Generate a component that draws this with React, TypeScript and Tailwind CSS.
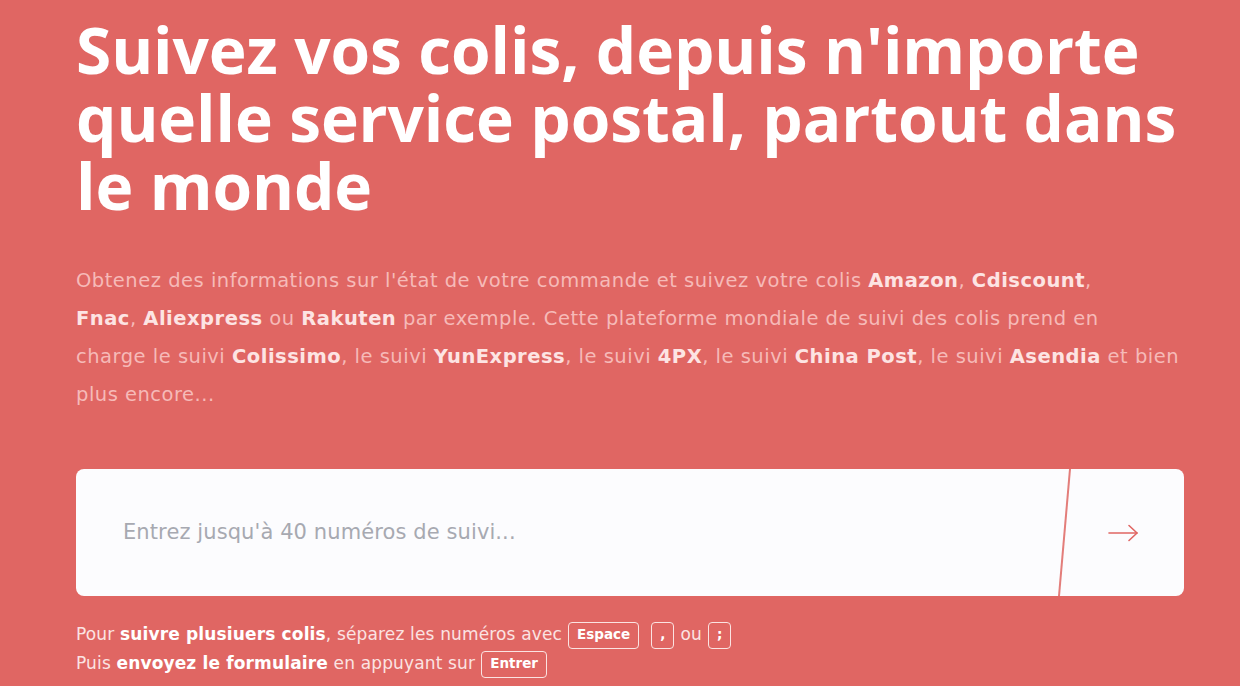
import React from 'react';

const Kbd: React.FC<{ children: React.ReactNode }> = ({ children }) => (
  <span className="inline-flex items-center justify-center h-[27px] min-w-[21px] px-[8px] mx-[6px] border-[1.5px] border-[#fbe3e2] rounded-[4px] text-[13.5px] leading-none font-bold tracking-normal text-white align-middle">
    {children}
  </span>
);

const ArrowIcon: React.FC = () => (
  <svg width="32" height="20" viewBox="0 0 32 20" fill="none" stroke="#e06663" strokeWidth="1.6" strokeLinecap="round" strokeLinejoin="round">
    <line x1="2" y1="10" x2="30" y2="10" />
    <polyline points="22,2.5 30,10 22,17.5" />
  </svg>
);

const App: React.FC = () => {
  return (
    <div className="min-h-screen w-full bg-[#e06663] font-['Open_Sans',sans-serif] overflow-hidden">
      <div className="pl-[76px] pr-[56px] pt-[16px]">
        <h1 className="text-white font-bold text-[64px] leading-[68px] tracking-[-0.1px]">
          Suivez vos colis, depuis n'importe<br />
          quelle service postal, partout dans<br />
          le monde
        </h1>

        <p className="mt-[42px] font-['DejaVu_Sans',sans-serif] text-[19.5px] leading-[38px] tracking-[0.5px] text-[#f6bab8] whitespace-nowrap">
          Obtenez des informations sur l'état de votre commande et suivez votre colis <b className="text-[#fde4e3]">Amazon</b>, <b className="text-[#fde4e3]">Cdiscount</b>,<br />
          <b className="text-[#fde4e3]">Fnac</b>, <b className="text-[#fde4e3]">Aliexpress</b> ou <b className="text-[#fde4e3]">Rakuten</b> par exemple. Cette plateforme mondiale de suivi des colis prend en<br />
          charge le suivi <b className="text-[#fde4e3]">Colissimo</b>, le suivi <b className="text-[#fde4e3]">YunExpress</b>, le suivi <b className="text-[#fde4e3]">4PX</b>, le suivi <b className="text-[#fde4e3]">China Post</b>, le suivi <b className="text-[#fde4e3]">Asendia</b> et bien<br />
          plus encore...
        </p>

        <div className="mt-[55px] w-[1108px] h-[127px] bg-[#fcfcfe] rounded-[8px] flex items-center relative overflow-hidden">
          <div className="flex-1 pl-[47px] font-['DejaVu_Sans',sans-serif] text-[21px] tracking-[0.1px] text-[#a7a9b1]">
            Entrez jusqu'à 40 numéros de suivi...
          </div>
          <div className="w-[124px] h-full flex items-center justify-center pl-[2px]">
            <ArrowIcon />
          </div>
          <svg className="absolute left-[982px] top-0 h-full w-[16px]" viewBox="0 0 16 127" preserveAspectRatio="none">
            <line x1="12" y1="0" x2="1" y2="127" stroke="#e37d7a" strokeWidth="2" />
          </svg>
        </div>

        <div className="mt-[24px] font-['DejaVu_Sans',sans-serif] text-[17px] leading-[29px] tracking-[0.15px] text-[#fbe3e2] whitespace-nowrap">
          <div>
            Pour <b className="text-white">suivre plusiuers colis</b>, séparez les numéros avec
            <Kbd>Espace</Kbd>
            <Kbd>,</Kbd>ou<Kbd>;</Kbd>
          </div>
          <div>
            Puis <b className="text-white">envoyez le formulaire</b> en appuyant sur
            <Kbd>Entrer</Kbd>
          </div>
        </div>
      </div>
    </div>
  );
};

export default App;
